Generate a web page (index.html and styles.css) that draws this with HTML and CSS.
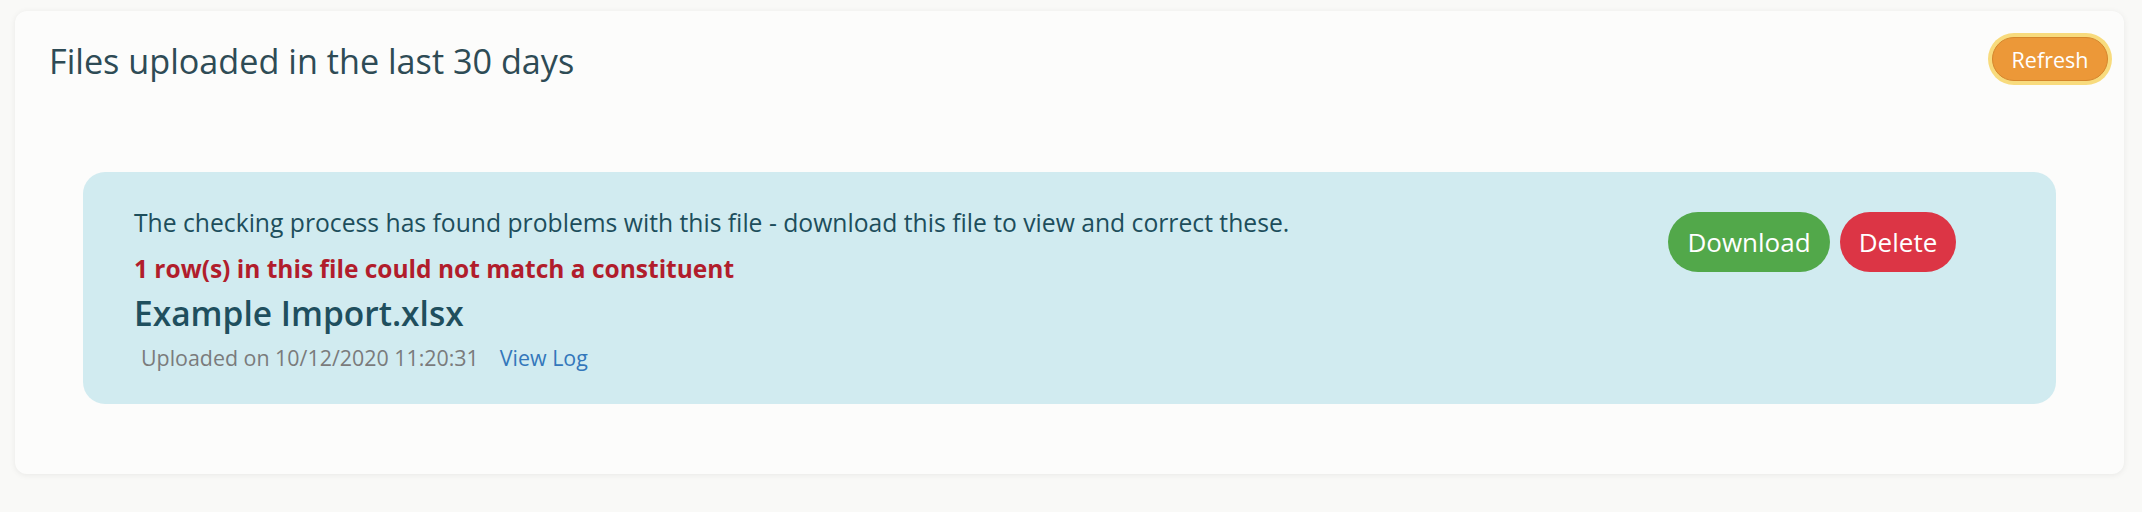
FILE: index.html
```html
<!DOCTYPE html>
<html lang="en">
<head>
<meta charset="utf-8">
<title>Files uploaded</title>
<link rel="stylesheet" href="styles.css">
</head>
<body>
<section class="card">
  <header class="card-header">
    <h2 class="card-title">Files uploaded in the last 30 days</h2>
    <button class="btn btn-refresh" type="button">Refresh</button>
  </header>
  <div class="card-body">
    <div class="alert">
      <div class="alert-info">
        <p class="alert-msg">The checking process has found problems with this file - download this file to view and correct these.</p>
        <p class="alert-error">1 row(s) in this file could not match a constituent</p>
        <h3 class="file-name">Example Import.xlsx</h3>
        <p class="file-meta"><span class="uploaded">Uploaded on 10/12/2020 11:20:31</span><a class="view-log" href="#">View Log</a></p>
      </div>
      <div class="alert-actions">
        <button class="btn btn-lg btn-download" type="button">Download</button>
        <button class="btn btn-lg btn-delete" type="button">Delete</button>
      </div>
    </div>
  </div>
</section>
</body>
</html>
```

FILE: styles.css
```css
html, body {
  margin: 0;
  padding: 0;
}
body {
  background: #f9f9f7;
  font-family: "Segoe UI", "Open Sans", "Noto Sans", sans-serif;
  width: 2142px;
  height: 512px;
  overflow: hidden;
  padding-top: 11px;
  box-sizing: border-box;
}
.card {
  margin: 0 18px 0 15px;
  background: #fcfcfb;
  border-radius: 12px;
  box-shadow: 0 1px 6px rgba(0, 0, 0, 0.07);
  padding-bottom: 70px;
}
.card-header {
  display: flex;
  justify-content: space-between;
  align-items: flex-start;
  padding: 22px 12px 0 34px;
  height: 161px;
  box-sizing: border-box;
}
.card-title {
  margin: 7px 0 0;
  font-size: 34.2px;
  font-weight: 400;
  line-height: 42px;
  color: #2e4b55;
}
.btn {
  font-family: inherit;
  border: 0;
  cursor: pointer;
  color: #fff;
}
.btn-refresh {
  width: 116px;
  height: 44px;
  margin: 4px;
  border: 1px solid #d5862c;
  border-radius: 22px;
  background: #ec9838;
  box-shadow: 0 0 0 4px #f8db7d;
  font-size: 21.5px;
  padding: 0;
}
.card-body {
  padding: 0 68px;
}
.alert {
  display: flex;
  justify-content: space-between;
  align-items: flex-start;
  background: #d1ebf0;
  border-radius: 22px;
  height: 232px;
  box-sizing: border-box;
  padding: 29px 100px 0 51px;
  color: #1d4e5c;
}
.alert-msg {
  margin: 0;
  font-size: 24.7px;
  line-height: 44px;
}
.alert-error {
  margin: 4px 0 0;
  font-size: 24.5px;
  font-weight: 700;
  line-height: 40px;
  color: #b11d2c;
}
.file-name {
  margin: 0;
  font-size: 33.5px;
  font-weight: 600;
  line-height: 48px;
  color: #1f4f5e;
}
.file-meta {
  margin: 0;
  padding-left: 7px;
  font-size: 21.4px;
  line-height: 42px;
}
.uploaded {
  color: #7a7b7c;
}
.view-log {
  margin-left: 21px;
  color: #3377bb;
  text-decoration: none;
}
.alert-actions {
  display: flex;
  gap: 10px;
  margin-top: 11px;
}
.btn-lg {
  height: 60px;
  border-radius: 30px;
  font-size: 26px;
  padding: 0 18px;
}
.btn-download {
  width: 162px;
  background: #52a84a;
}
.btn-delete {
  width: 116px;
  background: #dc3545;
}
```
